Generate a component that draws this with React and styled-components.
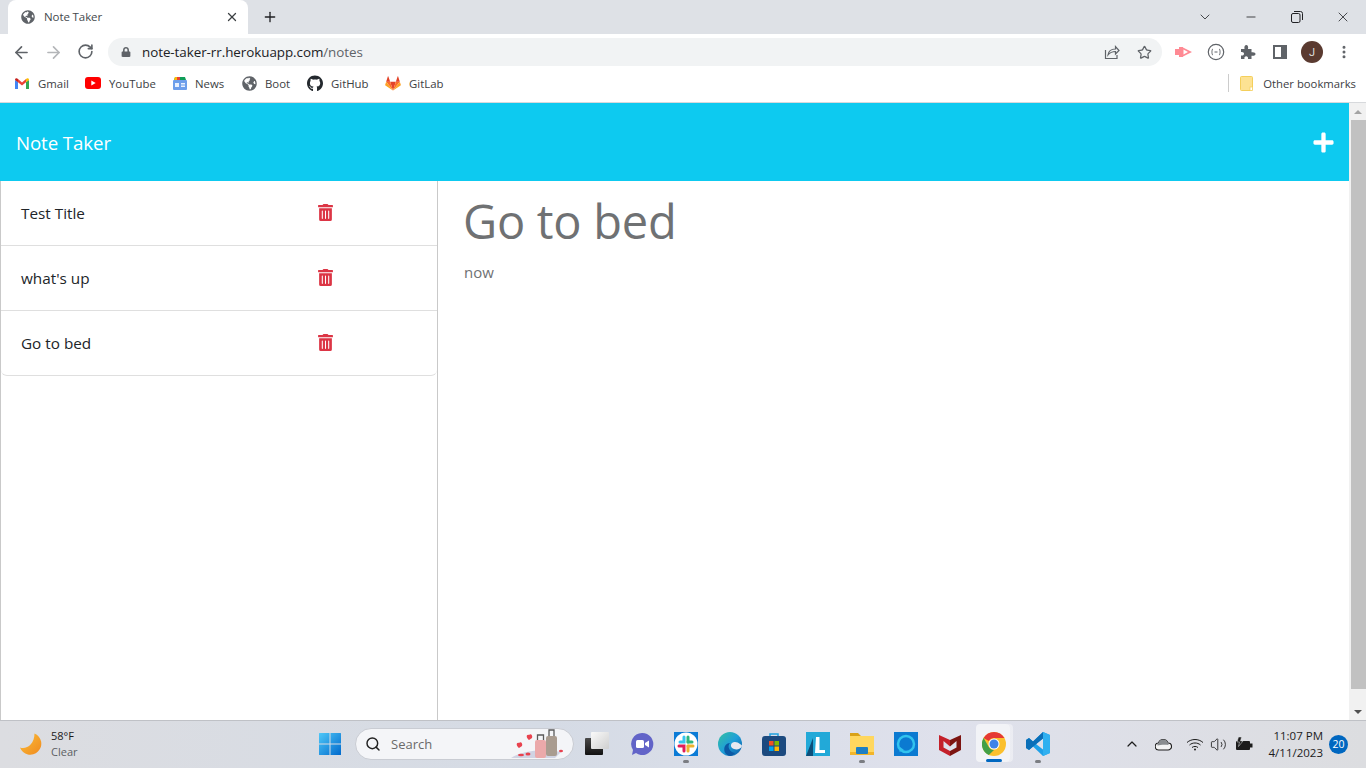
import React from 'react';
import styled, { createGlobalStyle } from 'styled-components';
import { FaTrashAlt, FaPlus, FaGlobeAmericas, FaGithub, FaLock } from 'react-icons/fa';
import { ArrowLeft, ArrowRight, RotateCw, Star, X, Plus, ChevronDown, Minus, ChevronUp, Search, Volume2, EllipsisVertical } from 'lucide-react';

const Global = createGlobalStyle`
  html, body { margin: 0; padding: 0; height: 100%; overflow: hidden; background: #fff; }
  * { box-sizing: border-box; }
  body { font-family: "Open Sans", "Noto Sans", Arial, sans-serif; }
`;
const Screen = styled.div`display:flex;flex-direction:column;width:1366px;height:768px;overflow:hidden;`;
const TabStrip = styled.div`height:34px;background:#dee1e6;display:flex;align-items:flex-end;flex:none;`;
const Tab = styled.div`margin-left:8px;width:240px;height:34px;background:#fff;border-radius:8px 8px 0 0;display:flex;align-items:center;padding:0 9px 0 13px;color:#45494d;font-size:11.5px;`;
const TabTitle = styled.span`margin:0 0 2px 9px;flex:1;letter-spacing:-.1px;`;
const NewTab = styled.div`margin-left:14px;width:16px;height:34px;display:flex;align-items:center;color:#202124;`;
const WindowControls = styled.div`margin-left:auto;display:flex;height:34px;align-items:center;padding-right:15px;gap:30px;color:#202124;`;
const Ctl = styled.span`display:flex;width:16px;justify-content:center;`;
const Toolbar = styled.div`height:36px;background:#fff;display:flex;align-items:center;flex:none;`;
const NavIcon = styled.div`width:32px;display:flex;justify-content:center;color:${p=>p.$c||'#5f6368'};`;
const NavGroup = styled.div`display:flex;padding-left:5px;width:108px;`;
const Omnibox = styled.div`width:1054px;height:28px;background:#f1f3f4;border-radius:14px;display:flex;align-items:center;padding:0 2px 0 13px;color:#5f6368;`;
const Url = styled.div`margin-left:11px;flex:1;font-size:13.4px;color:#202124;letter-spacing:-.05px;`;
const UrlTail = styled.span`color:#5f6368;`;
const OmniIcon = styled.div`width:32px;display:flex;justify-content:center;color:#5f6368;`;
const Extensions = styled.div`display:flex;padding-left:6px;align-items:center;`;
const Avatar = styled.div`width:22px;height:22px;border-radius:50%;background:#5a3a30;color:#ddd;font-size:11px;font-family:Roboto,sans-serif;display:flex;align-items:center;justify-content:center;`;
const Bookmarks = styled.div`height:33px;border-bottom:1px solid #d7d9dc;background:#fff;display:flex;align-items:center;padding:0 10px 6px 14px;flex:none;font-size:11.4px;color:#3c4043;`;
const Bookmark = styled.div`display:flex;align-items:center;width:${p=>p.$w}px;gap:${p=>p.$g||8}px;`;
const BmIcon = styled.div`width:16px;height:16px;display:flex;align-items:center;justify-content:center;flex:none;`;
const Other = styled.div`margin-left:auto;display:flex;align-items:center;`;
const OtherLabel = styled.span`margin-left:9px;font-size:11.3px;`;
const Sep = styled.div`width:1px;height:18px;background:#ccc;margin-right:9px;`;
const Viewport = styled.div`flex:1;display:flex;min-height:0;background:#fff;font-family:"Open Sans","Noto Sans",sans-serif;`;
const Page = styled.div`flex:1;display:flex;flex-direction:column;min-width:0;`;
const Header = styled.header`height:78px;background:#0dcaf0;display:flex;align-items:center;justify-content:space-between;padding:0 14px 0 16px;color:#fff;flex:none;`;
const Brand = styled.div`font-size:18.7px;letter-spacing:-.1px;`;
const Body = styled.div`flex:1;display:flex;min-height:0;`;
const Sidebar = styled.aside`width:438px;border-left:1px solid #c9c9c9;border-right:1px solid #c9c9c9;flex:none;`;
const NoteList = styled.ul`margin:0;padding:0;list-style:none;`;
const NoteRow = styled.li`height:65px;display:flex;align-items:center;justify-content:space-between;padding:0 103px 1px 20px;font-size:15.3px;color:#212529;border-bottom:1px solid #dfdfdf;&:last-child{border-radius:0 0 6px 6px;}`;
const Main = styled.main`flex:1;padding:13px 26px;color:#6f7173;`;
const Title = styled.h1`margin:0 0 0 -1px;font-size:47px;font-weight:400;line-height:54px;letter-spacing:-.27px;`;
const NoteBody = styled.p`margin:14px 0 0;font-size:15px;`;
const Scrollbar = styled.div`width:17px;background:#f1f1f1;display:flex;flex-direction:column;flex:none;`;
const ScrollBtn = styled.div`height:17px;display:flex;align-items:center;justify-content:center;flex:none;&:last-child{margin-top:auto;}`;
const Arrow = styled.div`width:0;height:0;border-left:4px solid transparent;border-right:4px solid transparent;${p=>p.$up?'border-bottom:4px solid #a3a3a3;':'border-top:4px solid #505050;'}`;
const Thumb = styled.div`height:569px;margin-left:2px;background:#c1c1c1;flex:none;`;
const Taskbar = styled.div`height:48px;flex:none;border-top:1px solid #bfc1c6;padding-bottom:1px;background:linear-gradient(90deg,#dcdde1,#d5dbe5 40%,#dfe1ec 70%,#dcdde0);display:flex;align-items:center;`;
const Weather = styled.div`width:317px;padding-left:19px;display:flex;align-items:center;gap:8px;flex:none;font-size:11px;line-height:16px;color:#1b1b1b;`;
const WeatherSub = styled.div`color:#5c5f63;`;
const Win = styled.div`width:38px;display:flex;flex:none;padding-left:1px;`;
const SearchBox = styled.div`width:219px;height:32px;margin-right:2px;border-radius:16px;background:#f4f5f8;border:1px solid #c9ccd3;display:flex;align-items:center;padding-left:9px;gap:10px;color:#6a6a6a;font-size:13px;flex:none;overflow:hidden;`;
const SearchArt = styled.div`margin-left:auto;margin-right:6px;display:flex;`;
const Apps = styled.div`display:flex;align-items:center;`;
const AppSlot = styled.div`width:44px;height:46px;display:flex;align-items:center;justify-content:center;position:relative;`;
const AppIcon = styled.span`position:relative;display:flex;`;
const ActiveBg = styled.div`position:absolute;left:4px;top:3px;width:34px;height:38px;border-radius:4px;background:rgba(255,255,255,.6);box-shadow:3px 0 0 rgba(255,255,255,.4);`;
const Dot = styled.div`position:absolute;bottom:${p=>p.$on?'5px':'4px'};left:50%;transform:translateX(-50%);width:${p=>p.$on?'16px':'6px'};height:3px;border-radius:2px;background:${p=>p.$on?'#0067c0':'#7b7d82'};`;
const Tray = styled.div`margin-left:auto;display:flex;align-items:center;padding-right:18px;color:#1c1c1c;`;
const TrayIcon = styled.div`width:${p=>p.$w||30}px;display:flex;justify-content:center;`;
const Clock = styled.div`text-align:right;font-size:11.5px;line-height:17px;margin-left:10px;`;
const Badge = styled.div`width:19px;height:19px;margin-left:6px;border-radius:50%;background:#0067c0;color:#fff;font-size:10.5px;display:flex;align-items:center;justify-content:center;`;

const Gmail=()=><svg width="14" height="11" viewBox="0 0 14 11"><path d="M0 2v9h3V4z" fill="#4285f4"/><path d="M14 2v9h-3V4z" fill="#34a853"/><path d="M3 1 7 4.500 11 1v3.200L7 7.500 3 4.200z" fill="#ea4335"/><path d="M0 2C0 .5 1.500-.3 3 1v3.200L0 2z" fill="#c5221f"/><path d="M14 2c0-1.500-1.500-2.300-3-1v3.200z" fill="#fbbc04"/></svg>;
const Youtube=()=><svg width="16" height="12" viewBox="0 0 16 12"><rect width="16" height="12" rx="3" fill="#f00"/><path d="M6.300 3.400v5.200L10.700 6z" fill="#fff"/></svg>;
const News=()=><svg width="16" height="15" viewBox="0 0 16 15"><path d="M3 1h10l1 3H2z" fill="#0f9d58"/><path d="M3 1h5v3H2z" fill="#fbbc04"/><path d="M5 1h3v3H5z" fill="#ea4335"/><rect x="1" y="4" width="14" height="10" rx="1" fill="#6d9eeb"/><rect x="3" y="7" width="4" height="4" fill="#e8f0fe"/><rect x="9" y="7" width="4" height="1.500" fill="#e8f0fe"/><rect x="9" y="9.500" width="4" height="1.500" fill="#e8f0fe"/></svg>;
const Gitlab=()=><svg width="18" height="17" viewBox="0 0 18 17"><path d="M9 16.500 12.200 6.500H5.800z" fill="#e24329"/><path d="M9 16.500 5.800 6.500H1.300z" fill="#fc6d26"/><path d="M1.300 6.500.2 10c-.1.300 0 .6.300.8L9 16.500z" fill="#fca326"/><path d="M1.300 6.500h4.500L3.800.5c-.1-.3-.5-.3-.6 0z" fill="#e24329"/><path d="M9 16.500l3.200-10h4.500z" fill="#fc6d26"/><path d="M16.700 6.500l1.100 3.500c.1.300 0 .6-.3.800L9 16.500z" fill="#fca326"/><path d="M16.700 6.500h-4.500l2-6c.1-.3.500-.3.600 0z" fill="#e24329"/></svg>;
const Folder=()=><svg width="13" height="15" viewBox="0 0 13 15"><rect x=".5" y=".5" width="12" height="14" rx="1" fill="#fde293" stroke="#f4cf5b"/><rect x="10" y="11" width="2.500" height="3.500" fill="#fff" stroke="#f4cf5b" strokeWidth=".7"/></svg>;
const ShareIcon=()=><svg width="16" height="16" viewBox="0 0 16 16" fill="none" stroke="#5f6368" strokeWidth="1.200"><path d="M1.500 6v8.500H13V11"/><path d="M4 11c.5-4 3.500-6 7.500-6V2.500L15 6.500l-3.500 3.500V7.500C8.500 7.500 6 8.500 4 11z"/></svg>;
const Puzzle=()=><svg width="16" height="16" viewBox="0 0 16 16" fill="#5f6368"><path d="M1 5h3.500C4 2.500 5 1 6.300 1S8.600 2.500 8 5h3.500v3.300c2.500-.5 4 .4 4 1.700s-1.500 2.200-4 1.700V15H8c.4-2-.6-2.800-1.800-2.800S4 13 4.500 15H1v-3.500c2 .4 3-.5 3-1.700S3 7.700 1 8.100z"/></svg>;
const Pointer=()=><svg width="18" height="14" viewBox="0 0 18 14"><path d="M0 4h4V2h4v.5L17 7l-9 4.500V12H4v-2H0z" fill="#ff8a94"/><path d="M8.500 4.500v5L13 7z" fill="#fff"/></svg>;
const CodeCircle=()=><svg width="18" height="18" viewBox="0 0 18 18" fill="none" stroke="#5f6368"><circle cx="9" cy="9" r="7.700" strokeWidth="1.200"/><path d="M6 6C4.500 6 5.500 9 4.500 9c1 0 0 3 1.500 3M12 6c1.500 0 .5 3 1.500 3-1 0 0 3-1.500 3M7.500 9h3" strokeWidth="1"/></svg>;
const SidePanel=()=><svg width="14" height="14" viewBox="0 0 14 14"><rect x="1" y="1" width="12" height="12" fill="none" stroke="#5f6368" strokeWidth="2"/><rect x="8" y="1" width="5" height="12" fill="#5f6368"/></svg>;
const RestoreIcon=()=><svg width="12" height="12" viewBox="0 0 12 12" fill="none" stroke="#202124"><rect x=".5" y="2.500" width="8.500" height="9" rx="1.500"/><path d="M3 .5h6.500a2 2 0 0 1 2 2V9"/></svg>;
const Moon=()=><svg width="24" height="24" viewBox="0 0 24 24"><defs><linearGradient id="mn" x1="0" y1="0" x2="1" y2="1"><stop offset="0" stopColor="#fbbf3a"/><stop offset="1" stopColor="#f08a1e"/></linearGradient></defs><path d="M15.500 1.500A11 11 0 1 1 1 15.500c6 2.500 14.500-3 14.500-14z" fill="url(#mn)"/></svg>;
const WinLogo=()=><svg width="24" height="24" viewBox="0 0 24 24"><defs><linearGradient id="wl" x1="0" y1="0" x2="1" y2="1"><stop offset="0" stopColor="#4fc8f8"/><stop offset="1" stopColor="#0069cc"/></linearGradient></defs><path fill="url(#wl)" d="M1 1.500a.5.500 0 0 1 .5-.5H11.500v10.500H1zM12.500 1h10a.5.500 0 0 1 .5.500v10H12.500zM1 12.500h10.500V23h-10a.5.500 0 0 1-.5-.5zM12.500 12.500H23v10a.5.500 0 0 1-.5.500h-10z"/></svg>;
const Luggage=()=><svg width="56" height="30" viewBox="0 0 56 30"><path d="M0 29c10-7 32-10 50-6l-6 6z" fill="#d0d3e3"/><rect x="24" y="11" width="11" height="18" rx="2" fill="#eba9aa"/><rect x="35" y="7" width="11" height="20" rx="2" fill="#a99c90"/><path d="M26.500 11V6h6v5M38 7V1h5v6" fill="none" stroke="#5a5a5a" strokeWidth="1.300"/><path d="M8 19c-3-2-3-6 0-5 2-2 4 1 3 3zM18 11c-3-2-3-6 0-5 2-2 4 1 3 3z" fill="#e8424f"/><ellipse cx="10" cy="26" rx="3" ry="1.300" fill="#e8424f"/><ellipse cx="17" cy="25" rx="2.500" ry="1.500" fill="#e8424f"/><ellipse cx="50" cy="22" rx="2" ry="1.200" fill="#e8424f"/></svg>;
const Files=()=><svg width="24" height="24" viewBox="0 0 24 24"><path d="M0 1h8l3 3h13v5H0z" fill="#d9a218"/><rect y="4" width="24" height="19" fill="#ffd75e"/><rect y="20" width="24" height="3" fill="#f3b52a"/><rect x="6" y="15" width="12" height="7" rx="1" fill="#1d7fc4"/></svg>;
const Stack=()=><svg width="26" height="24" viewBox="0 0 26 24"><defs><linearGradient id="st" x1="0" y1="0" x2="1" y2="1"><stop offset="0" stopColor="#fafafa"/><stop offset="1" stopColor="#cfcfcf"/></linearGradient><linearGradient id="sd" x1="0" y1="0" x2="0" y2="1"><stop offset="0" stopColor="#4a4a4a"/><stop offset="1" stopColor="#111"/></linearGradient></defs><rect x="0" y="6" width="18" height="17" rx="1" fill="url(#sd)"/><rect x="6" y="0" width="18" height="17" rx="1" fill="url(#st)"/></svg>;
const Teams=()=><svg width="24" height="24" viewBox="0 0 24 24"><path d="M12 1a11 11 0 1 1-6 20l-4 2 1-5A11 11 0 0 1 12 1z" fill="#6264c8"/><rect x="6" y="8" width="8" height="8" rx="1.500" fill="#fff"/><path d="M15 11l4-2.500v7L15 13z" fill="#fff"/></svg>;
const Slack=()=><svg width="24" height="24" viewBox="0 0 24 24"><rect width="24" height="24" fill="#0b7bd6"/><circle cx="12" cy="12" r="11.500" fill="#fff"/><g strokeWidth="3" strokeLinecap="round" fill="none"><path d="M10 5v5H6" stroke="#36c5f0"/><path d="M14 5v5" stroke="#2eb67d"/><path d="M18 10h-4" stroke="#2eb67d"/><path d="M5 14h5v5" stroke="#e01e5a"/><path d="M14 14h5" stroke="#ecb22e"/><path d="M14 14v5" stroke="#ecb22e"/></g></svg>;
const Edge=()=><svg width="24" height="24" viewBox="0 0 24 24"><defs><linearGradient id="ed" x1="0" y1="0" x2="1" y2="1"><stop offset="0" stopColor="#35c1a0"/><stop offset=".5" stopColor="#1f9fd8"/><stop offset="1" stopColor="#0c59a4"/></linearGradient></defs><circle cx="12" cy="12" r="12" fill="url(#ed)"/><path d="M24 14c-1 3-5 4-8 3-3-1-4-4-2-6 2-2 6-1 8 1 1 1 2 1 2 2z" fill="#e7e9f0"/><path d="M12 24C7 23 5 18 7 14c1-2 3-3 5-3-3 3-1 9 5 10-1.500 2-3 3-5 3z" fill="#0c59a4"/></svg>;
const Store=()=><svg width="24" height="24" viewBox="0 0 24 24"><path d="M8 4V2h8v2" fill="none" stroke="#1fa3e0" strokeWidth="1.500"/><rect y="4" width="24" height="20" rx="3" fill="#1c4a7f"/><rect x="7" y="9" width="4.500" height="4.500" fill="#f25022"/><rect x="12.500" y="9" width="4.500" height="4.500" fill="#7fba00"/><rect x="7" y="14.500" width="4.500" height="4.500" fill="#00a4ef"/><rect x="12.500" y="14.500" width="4.500" height="4.500" fill="#ffb900"/></svg>;
const Lapp=()=><svg width="24" height="24" viewBox="0 0 24 24"><rect width="24" height="24" fill="#22a9d8"/><path d="M0 24 7 6v18z" fill="#0d4f7a"/><path d="M10 5h3.500v13H19v3H9z" fill="#fff"/></svg>;
const Alexa=()=><svg width="24" height="24" viewBox="0 0 24 24"><rect width="24" height="24" fill="#0b7ad1"/><circle cx="12" cy="12" r="8" fill="none" stroke="#31c3ee" strokeWidth="2.500"/><path d="M6 15l-.5 5 4.500-2z" fill="#31c3ee"/></svg>;
const Mcafee=()=><svg width="22" height="24" viewBox="0 0 22 24"><path fillRule="evenodd" d="M0 3 11 8v16L0 18zM4.500 9v6.500L11 19v-4.500z" fill="#c4202a"/><path fillRule="evenodd" d="M22 3 11 8v16l11-6zM17.500 9v6.500L11 19v-4.500z" fill="#7c1411"/></svg>;
const Chrome=()=><svg width="24" height="24" viewBox="0 0 24 24"><circle cx="12" cy="12" r="12" fill="#fbc02d"/><path d="M12 0a12 12 0 0 1 10.400 6H12a6 6 0 0 0-5.200 3L1.600 6A12 12 0 0 1 12 0z" fill="#e53935"/><path d="M1.600 6 6.800 15a6 6 0 0 0 5.200 3l-5.200 5A12 12 0 0 1 1.600 6z" fill="#43a047"/><circle cx="12" cy="12" r="5.500" fill="#fff"/><circle cx="12" cy="12" r="4.500" fill="#3f83e8"/></svg>;
const Vscode=()=><svg width="24" height="24" viewBox="0 0 24 24"><path d="M17 0 24 3v18l-7 3L7 14.500 3 18l-3-2V8l3-2 4 3.500z" fill="#1fa0e8"/><path d="M17 6.500 10 12l7 5.500z" fill="#dfe1ec"/><path d="M17 0 24 3v18l-7 3z" fill="#30b0f0"/><path d="M0 16l3 2L17 6.500V0L7 9.500 3 6 0 8z" fill="#0b6fb8"/></svg>;
const Cloud=()=><svg width="17" height="13" viewBox="0 0 17 13"><path d="M4 12a3.500 3.500 0 0 1-.5-7 5 5 0 0 1 9.500 0 3.500 3.500 0 0 1 0 7z" fill="#f4f4f4" stroke="#1c1c1c" strokeWidth="1.100"/><path d="M3.500 5a5 5 0 0 1 9.500 0c.5 1 .5 2 .5 2-3-.5-8-.5-11 .5-.5-1 .3-2.500 1-2.500z" fill="#8a8d90"/></svg>;
const WifiIcon=()=><svg width="18" height="13" viewBox="0 0 18 13" fill="none" stroke="#1c1c1c" strokeWidth="1"><path d="M1 4.500c4.500-4 11.500-4 16 0M3.500 7c3-2.700 8-2.700 11 0M6 9.500c1.700-1.400 4.300-1.400 6 0"/><circle cx="9" cy="11.500" r="1" fill="#1c1c1c" stroke="none"/></svg>;
const Battery=()=><svg width="18" height="15" viewBox="0 0 18 15"><rect x="1" y="4" width="14" height="9" rx="1" fill="#1c1c1c"/><rect x="15" y="6.500" width="2.500" height="4" fill="#1c1c1c"/><path d="M3.500 0 2 5h2.500L3.500 9.500 8 4H5.500L6.500 0z" fill="#1c1c1c" stroke="#dfe0e3" strokeWidth=".5"/></svg>;

const notes=["Test Title","what's up","Go to bed"];
const apps=[[Stack],[Teams],[Slack,1],[Edge],[Store],[Lapp],[Files,1],[Alexa],[Mcafee],[Chrome,2],[Vscode,1]];

export default function App(){
  return <Screen><Global/>
    <TabStrip>
      <Tab><FaGlobeAmericas size={14} color="#5f6368"/><TabTitle>Note Taker</TabTitle><X size={14} strokeWidth={2.2} color="#3c4043"/></Tab>
      <NewTab><Plus size={16} strokeWidth={2}/></NewTab>
      <WindowControls>
        <Ctl><ChevronDown size={16} strokeWidth={1.2}/></Ctl><Ctl><Minus size={14} strokeWidth={1.4}/></Ctl><Ctl><RestoreIcon/></Ctl><Ctl><X size={16} strokeWidth={1.2}/></Ctl>
      </WindowControls>
    </TabStrip>
    <Toolbar>
      <NavGroup>
        <NavIcon><ArrowLeft size={19} strokeWidth={2.1}/></NavIcon>
        <NavIcon $c="#b4b6b9"><ArrowRight size={19} strokeWidth={2.1}/></NavIcon>
        <NavIcon><RotateCw size={17} strokeWidth={2.3}/></NavIcon>
      </NavGroup>
      <Omnibox>
        <FaLock size={10}/>
        <Url>note-taker-rr.herokuapp.com<UrlTail>/notes</UrlTail></Url>
        <OmniIcon><ShareIcon/></OmniIcon>
        <OmniIcon><Star size={15} strokeWidth={2}/></OmniIcon>
      </Omnibox>
      <Extensions>
        <NavIcon><Pointer/></NavIcon><NavIcon><CodeCircle/></NavIcon><NavIcon><Puzzle/></NavIcon><NavIcon><SidePanel/></NavIcon>
        <NavIcon><Avatar>J</Avatar></NavIcon><NavIcon><EllipsisVertical size={16} strokeWidth={2.5}/></NavIcon>
      </Extensions>
    </Toolbar>
    <Bookmarks>
      <Bookmark $w={71}><BmIcon><Gmail/></BmIcon>Gmail</Bookmark>
      <Bookmark $w={87}><BmIcon><Youtube/></BmIcon>YouTube</Bookmark>
      <Bookmark $w={69} $g={7}><BmIcon><News/></BmIcon>News</Bookmark>
      <Bookmark $w={66}><BmIcon><FaGlobeAmericas size={15} color="#5f6368"/></BmIcon>Boot</Bookmark>
      <Bookmark $w={78}><BmIcon><FaGithub size={17} color="#24292e"/></BmIcon>GitHub</Bookmark>
      <Bookmark $w={70}><BmIcon><Gitlab/></BmIcon>GitLab</Bookmark>
      <Other><Sep/><BmIcon><Folder/></BmIcon><OtherLabel>Other bookmarks</OtherLabel></Other>
    </Bookmarks>
    <Viewport>
      <Page>
        <Header><Brand>Note Taker</Brand><FaPlus size={23}/></Header>
        <Body>
          <Sidebar><NoteList>{notes.map(n=><NoteRow key={n}><span>{n}</span><FaTrashAlt size={17} color="#dc3545"/></NoteRow>)}</NoteList></Sidebar>
          <Main><Title>Go to bed</Title><NoteBody>now</NoteBody></Main>
        </Body>
      </Page>
      <Scrollbar><ScrollBtn><Arrow $up/></ScrollBtn><Thumb/><ScrollBtn><Arrow/></ScrollBtn></Scrollbar>
    </Viewport>
    <Taskbar>
      <Weather><Moon/><div><div>58°F</div><WeatherSub>Clear</WeatherSub></div></Weather>
      <Win><WinLogo/></Win>
      <SearchBox><Search size={16} color="#222" strokeWidth={2.2}/>Search<SearchArt><Luggage/></SearchArt></SearchBox>
      <Apps>{apps.map(([I,s],i)=><AppSlot key={i}>{s===2&&<ActiveBg/>}<AppIcon><I/></AppIcon>{s&&<Dot $on={s===2}/>}</AppSlot>)}</Apps>
      <Tray>
        <TrayIcon><ChevronUp size={16} strokeWidth={1.8}/></TrayIcon>
        <TrayIcon $w={34}><Cloud/></TrayIcon>
        <TrayIcon $w={28}><WifiIcon/></TrayIcon>
        <TrayIcon $w={20}><Volume2 size={17} strokeWidth={1.2}/></TrayIcon>
        <TrayIcon $w={30}><Battery/></TrayIcon>
        <Clock><div>11:07 PM</div><div>4/11/2023</div></Clock>
        <Badge>20</Badge>
      </Tray>
    </Taskbar>
  </Screen>;
}
